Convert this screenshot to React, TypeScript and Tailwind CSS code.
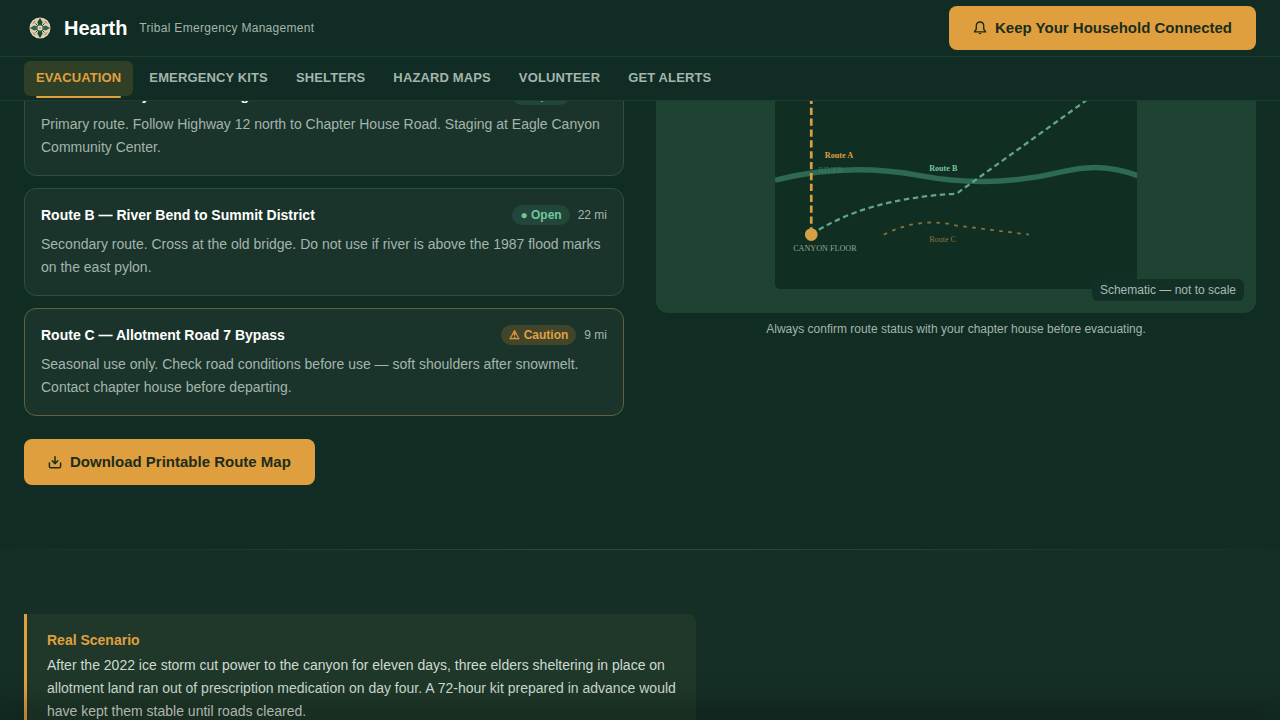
import React, { useState } from 'react';
import clsx from 'clsx';

interface Route {
  id: string;
  name: string;
  status: 'open' | 'caution';
  distance: string;
  description: string;
}

const navItems = ['Evacuation', 'Emergency Kits', 'Shelters', 'Hazard Maps', 'Volunteer', 'Get Alerts'];

const routes: Route[] = [
  {
    id: 'a',
    name: 'Route A — Canyon Floor to High Mesa',
    status: 'open',
    distance: '14 mi',
    description: 'Primary route. Follow Highway 12 north to Chapter House Road. Staging at Eagle Canyon Community Center.',
  },
  {
    id: 'b',
    name: 'Route B — River Bend to Summit District',
    status: 'open',
    distance: '22 mi',
    description: 'Secondary route. Cross at the old bridge. Do not use if river is above the 1987 flood marks on the east pylon.',
  },
  {
    id: 'c',
    name: 'Route C — Allotment Road 7 Bypass',
    status: 'caution',
    distance: '9 mi',
    description: 'Seasonal use only. Check road conditions before use — soft shoulders after snowmelt. Contact chapter house before departing.',
  },
];

export default function App() {
  const [active, setActive] = useState('Evacuation');

  return (
    <div className="h-screen overflow-y-auto [scrollbar-width:none] bg-[#102c23] font-['Liberation_Sans',Arial,sans-serif] text-white">
      <header className="fixed inset-x-0 top-0 z-10 bg-[#112c24]">
        <div className="flex h-14 items-center justify-between px-6">
          <a href="#top" className="flex items-center gap-2">
            <Logo />
            <span className="text-xl font-bold">Hearth</span>
            <span className="ml-1 text-xs tracking-wide text-[#a3b5ad]">Tribal Emergency Management</span>
          </a>
          <button className="flex h-11 items-center gap-2 rounded-lg bg-[#e09f3e] px-6 text-[15px] font-bold text-[#1b2d1c]">
            <BellIcon />
            Keep Your Household Connected
          </button>
        </div>
        <nav className="flex h-[45px] items-start gap-1 border-y border-[#1e3d31] px-6 pt-1">
          {navItems.map((item) => (
            <a
              key={item}
              href="#top"
              onClick={() => setActive(item)}
              className={clsx(
                'relative flex h-[35px] items-center rounded-md px-3 pb-0.5 text-[13px] font-bold tracking-[0.01em] uppercase',
                item === active ? 'bg-[#2f4026] text-[#e0a040]' : 'text-[#a3b5ad]'
              )}
            >
              {item}
              {item === active && <span className="absolute inset-x-3 -bottom-0.5 h-0.5 rounded-full bg-[#e0a040]" />}
            </a>
          ))}
        </nav>
      </header>

      <main id="top" className="-mt-[7px]">
        <section className="grid grid-cols-2 items-start gap-8 px-6 pb-16">
          <div className="pt-[75px]">
            <div className="flex flex-col gap-3">
              {routes.map((route) => (
                <RouteCard key={route.id} route={route} />
              ))}
            </div>
            <button className="mt-[23px] flex h-[46px] items-center gap-2 rounded-lg bg-[#e09f3e] px-6 text-[15px] font-bold text-[#1b2d1c]">
              <DownloadIcon />
              Download Printable Route Map
            </button>
          </div>

          <figure>
            <div className="relative flex h-80 justify-center rounded-xl bg-[#1e4332] p-6">
              <RouteMap />
              <span className="absolute right-3 bottom-3 rounded-md bg-[#123026] px-2 py-[3px] text-xs text-[#a8bab2]">
                Schematic — not to scale
              </span>
            </div>
            <figcaption className="mt-2 text-center text-xs text-[#a3b5ad]">
              Always confirm route status with your chapter house before evacuating.
            </figcaption>
          </figure>
        </section>

        <div className="bg-[#152f26]">
          <div className="h-px bg-linear-to-r from-transparent via-[#2b4d3f] to-transparent" />
          <section className="px-6 py-16">
            <div className="max-w-2xl rounded-r-lg border-l-[3px] border-[#e0a040] bg-[#1f3829] px-5 py-4 text-sm">
              <h3 className="leading-5 font-bold text-[#e0a040]">Real Scenario</h3>
              <p className="mt-1 leading-[23px] text-[#cfdad3]">
                After the 2022 ice storm cut power to the canyon for eleven days, three elders sheltering in place on
                allotment land ran out of prescription medication on day four. A 72-hour kit prepared in advance would
                have kept them stable until roads cleared.
              </p>
            </div>
          </section>
        </div>
      </main>

      <div className="pointer-events-none fixed inset-x-0 bottom-0 z-20 h-0 shadow-[0_0_32px_8px_rgba(0,0,0,0.5)]" />
    </div>
  );
}

function RouteCard({ route }: { route: Route }) {
  const caution = route.status === 'caution';

  return (
    <article className={clsx('rounded-xl border bg-[#1a342b] p-4', caution ? 'border-[#5f6438]' : 'border-[#2a5142]')}>
      <div className="flex h-5 items-center justify-between">
        <h3 className="text-sm font-bold">{route.name}</h3>
        <div className="flex items-center gap-2 text-xs">
          <span
            className={clsx(
              'rounded-full px-2 py-0.5 font-bold',
              caution ? 'bg-[#41452a] text-[#e0a040]' : 'bg-[#22473a] text-[#74c69d]'
            )}
          >
            {caution ? '⚠ Caution' : '● Open'}
          </span>
          <span className="text-[#a3b5ad]">{route.distance}</span>
        </div>
      </div>
      <p className="mt-2 text-sm leading-[23px] text-[#a3b5ad]">{route.description}</p>
    </article>
  );
}

function RouteMap() {
  return (
    <svg viewBox="0 0 400 300" className="h-full" fontFamily="Liberation Serif, serif" fontSize="9" fill="none">
      <rect width="400" height="300" rx="6" fill="#102e22" />
      {/* River */}
      <path d="M0 180 Q80 160 160 175 Q240 190 320 170 Q360 160 400 175" stroke="#2d6a4f" strokeWidth="6" />
      <text x="48" y="172" fill="#35805f">RIVER</text>
      {/* Routes */}
      <path d="M40 240 L40 60" stroke="#d6a045" strokeWidth="3" strokeDasharray="8 4" />
      <path d="M40 240 Q100 200 200 195 L360 80" stroke="#62a688" strokeWidth="2.5" strokeDasharray="6 4" />
      <path d="M120 240 Q160 220 200 230 L280 240" stroke="#8a7435" strokeWidth="2" strokeDasharray="4 6" />
      <circle cx="40" cy="240" r="7" fill="#d6a045" />
      <text x="20" y="258" fill="#8fa79b">CANYON FLOOR</text>
      <text x="55" y="155" fill="#e0a040" fontWeight="bold">Route A</text>
      <text x="170" y="170" fill="#74c69d" fontWeight="bold">Route B</text>
      <text x="170" y="248" fill="#8a7435">Route C</text>
    </svg>
  );
}

function Logo() {
  return (
    <svg className="h-8 w-8" viewBox="0 0 32 32" fill="none">
      <circle cx="16" cy="16" r="10.5" fill="#e3d2ae" />
      {/* Four petals around the hearth */}
      <path d="M16 6 L18.6 10 L17.6 14 H14.4 L13.4 10 Z" fill="#1d4a3b" />
      <path d="M16 26 L18.6 22 L17.6 18 H14.4 L13.4 22 Z" fill="#1d4a3b" />
      <path d="M6 16 L10 13.4 L14 14.4 V17.6 L10 18.6 Z" fill="#35614f" />
      <path d="M26 16 L22 13.4 L18 14.4 V17.6 L22 18.6 Z" fill="#35614f" />
      <path d="M9 11.6 Q10 9.8 11.6 9 M20.4 9 Q22 9.8 23 11.6 M23 20.4 Q22 22.2 20.4 23 M11.6 23 Q10 22.2 9 20.4" stroke="#7d7550" strokeWidth="1" />
      <path d="M11.4 11.4 L14 14 M20.6 11.4 L18 14 M20.6 20.6 L18 18 M11.4 20.6 L14 18" stroke="#1d4a3b" strokeWidth="1" />
      <circle cx="16" cy="16" r="3" fill="#e8ddc0" stroke="#4f7763" strokeWidth="1" />
      <circle cx="16" cy="16" r="1" fill="#b89a5c" />
    </svg>
  );
}

function BellIcon() {
  return (
    <svg className="h-3.5 w-3.5" viewBox="0 0 14 14" fill="none" stroke="currentColor" strokeWidth="1.4" strokeLinejoin="round">
      <path d="M7 1 C4.8 1 3.3 2.6 3.3 4.8 V8 L1.4 10.9 H12.6 L10.7 8 V4.8 C10.7 2.6 9.2 1 7 1 Z" />
      <path d="M5.4 12 Q7 14.4 8.6 12 Z" fill="currentColor" stroke="none" />
    </svg>
  );
}

function DownloadIcon() {
  return (
    <svg className="h-3.5 w-3.5" viewBox="0 0 14 14" fill="none" stroke="currentColor" strokeWidth="1.5" strokeLinecap="round" strokeLinejoin="round">
      <path d="M7 1.8 V8.4 M4.2 5.8 L7 8.6 L9.8 5.8" />
      <path d="M1.4 8 V11.4 Q1.4 12.8 2.8 12.8 H11.2 Q12.6 12.8 12.6 11.4 V8" />
    </svg>
  );
}
